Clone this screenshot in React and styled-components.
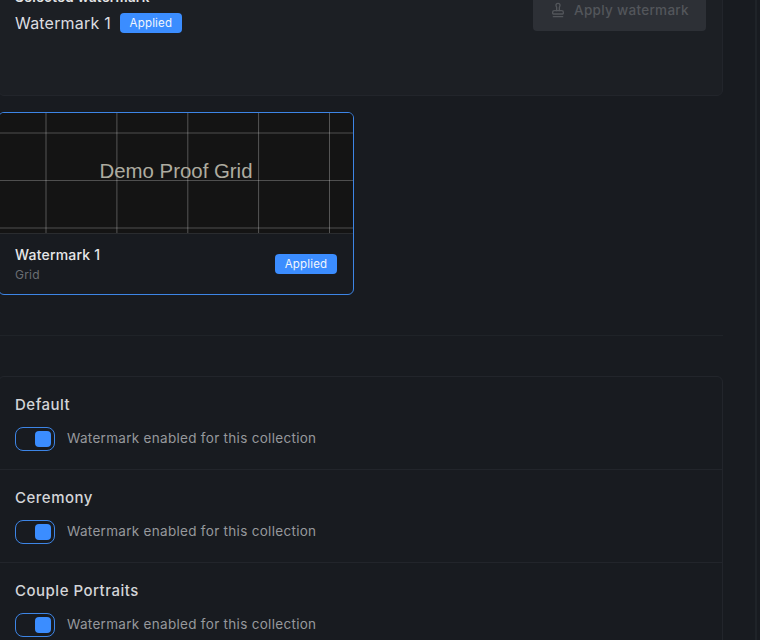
import React from "react";
import styled, { createGlobalStyle } from "styled-components";
import { Stamp } from "lucide-react";

const Global = createGlobalStyle`
  html, body { margin: 0; padding: 0; background: #181b20; overflow: hidden; }
  body { font-family: Inter, "Noto Sans", sans-serif; }
`;

const Page = styled.div`
  width: 760px;
  height: 640px;
  overflow: hidden;
  background: #181b20;
`;

const Main = styled.main`
  box-sizing: border-box;
  width: 759px;
  height: 720px;
  margin: -30px 0 0 -2px;
  padding-right: 32px;
  border-right: 2px solid #1f2328;
`;

const Inner = styled.div`
  width: 725px;
`;

const SelectedCard = styled.section`
  box-sizing: border-box;
  height: 126px;
  padding: 16px;
  display: flex;
  justify-content: space-between;
  align-items: flex-start;
  background: #1c1f24;
  border: 1px solid #22252b;
  border-radius: 6px;
`;

const Label = styled.div`
  height: 20px;
  line-height: 20px;
  font-size: 13.5px;
  font-weight: 600;
  color: #e4e5e7;
  letter-spacing: 0.2px;
`;

const SelectedRow = styled.div`
  display: flex;
  align-items: center;
  gap: 9px;
  margin-top: 6px;
`;

const SelectedName = styled.span`
  font-size: 16px;
  line-height: 20px;
  color: #dcdde0;
  letter-spacing: 0.2px;
`;

const Badge = styled.span`
  display: inline-flex;
  align-items: center;
  justify-content: center;
  width: 62px;
  height: 20px;
  border-radius: 4px;
  background: #3b8dff;
  color: #f2f6fc;
  font-size: 11.5px;
  letter-spacing: 0.2px;
`;

const ApplyButton = styled.button`
  width: 173px;
  height: 42px;
  margin-top: 2px;
  display: flex;
  align-items: center;
  justify-content: center;
  gap: 8px;
  border: 0;
  border-radius: 4px;
  background: #2d3036;
  color: #53565b;
  font-family: inherit;
  font-size: 13.5px;
  font-weight: 500;
  letter-spacing: 0.3px;
`;

const WatermarkCard = styled.article`
  box-sizing: border-box;
  width: 356px;
  margin-top: 16px;
  border: 1px solid #3d85e6;
  border-radius: 6px;
  overflow: hidden;
  background: #181b20;
`;

const Preview = styled.div`
  position: relative;
  height: 120px;
  background: #141414;
  border-bottom: 1px solid #2a2c2f;
  display: flex;
  align-items: center;
  justify-content: center;
`;

const GridLines = styled.svg`
  position: absolute;
  inset: 0;
  width: 100%;
  height: 100%;
`;

const PreviewText = styled.span`
  position: relative;
  padding-bottom: 4px;
  font-family: "Liberation Sans", Arial, sans-serif;
  font-size: 20.4px;
  color: #aeaca0;
`;

const CardFooter = styled.div`
  height: 60px;
  padding: 0 16px;
  display: flex;
  align-items: center;
  justify-content: space-between;
`;

const CardName = styled.div`
  font-size: 14px;
  line-height: 18px;
  font-weight: 500;
  color: #e6e7e9;
  letter-spacing: 0.2px;
`;

const CardType = styled.div`
  font-size: 12px;
  line-height: 16px;
  margin-top: 3px;
  color: #6b6e73;
  letter-spacing: 0.2px;
`;

const Divider = styled.hr`
  margin: 40px 0;
  border: 0;
  border-top: 1px solid #1f2328;
`;

const CollectionCard = styled.section`
  border: 1px solid #22252b;
  border-radius: 6px;
`;

const CollectionRow = styled.div`
  box-sizing: border-box;
  height: 93px;
  padding: 17px 16px 0;
  border-bottom: 1px solid #22252b;
`;

const CollectionName = styled.div`
  font-size: 15px;
  line-height: 22px;
  font-weight: 500;
  color: #d4d5d8;
  letter-spacing: 0.5px;
`;

const ToggleRow = styled.div`
  display: flex;
  align-items: center;
  gap: 12px;
  margin-top: 11px;
`;

const Toggle = styled.span`
  box-sizing: border-box;
  width: 40px;
  height: 24px;
  padding: 3px;
  display: flex;
  justify-content: flex-end;
  border: 1px solid #3d85e6;
  border-radius: 8px;
`;

const Thumb = styled.span`
  width: 16px;
  height: 16px;
  border-radius: 4px;
  background: #3b8dff;
`;

const ToggleLabel = styled.span`
  padding-bottom: 2px;
  font-size: 13.5px;
  color: #96989c;
  letter-spacing: 0.3px;
`;

const collections = ["Default", "Ceremony", "Couple Portraits"];

const verticals = [47, 117.9, 188.8, 259.6, 330.5];
const horizontals = [20, 67.5, 115];

function ProofGrid() {
  return (
    <GridLines viewBox="0 0 354 120" preserveAspectRatio="none">
      {horizontals.map((y) => (
        <line key={y} x1="0" x2="354" y1={y} y2={y} stroke="#fff" strokeOpacity="0.25" />
      ))}
      {verticals.map((x) => (
        <line key={x} x1={x} x2={x} y1="0" y2="120" stroke="#fff" strokeOpacity="0.28" />
      ))}
    </GridLines>
  );
}

export default function App() {
  return (
    <Page>
      <Global />
      <Main>
        <Inner>
          <SelectedCard>
            <div>
              <Label>Selected watermark</Label>
              <SelectedRow>
                <SelectedName>Watermark 1</SelectedName>
                <Badge>Applied</Badge>
              </SelectedRow>
            </div>
            <ApplyButton disabled>
              <Stamp size={16} strokeWidth={2} />
              Apply watermark
            </ApplyButton>
          </SelectedCard>

          <WatermarkCard>
            <Preview>
              <ProofGrid />
              <PreviewText>Demo Proof Grid</PreviewText>
            </Preview>
            <CardFooter>
              <div>
                <CardName>Watermark 1</CardName>
                <CardType>Grid</CardType>
              </div>
              <Badge>Applied</Badge>
            </CardFooter>
          </WatermarkCard>

          <Divider />

          <CollectionCard>
            {collections.map((name) => (
              <CollectionRow key={name}>
                <CollectionName>{name}</CollectionName>
                <ToggleRow>
                  <Toggle>
                    <Thumb />
                  </Toggle>
                  <ToggleLabel>Watermark enabled for this collection</ToggleLabel>
                </ToggleRow>
              </CollectionRow>
            ))}
          </CollectionCard>
        </Inner>
      </Main>
    </Page>
  );
}
